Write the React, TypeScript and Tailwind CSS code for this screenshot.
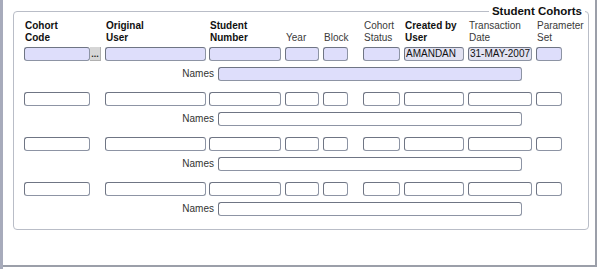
const cols = [
  { top: 'Cohort', bottom: 'Code', bold: true, w: 'w-[66px]', ml: 'ml-0', lookup: true },
  { top: 'Original', bottom: 'User', bold: true, w: 'w-[101px]', ml: 'ml-[4px]' },
  { top: 'Student', bottom: 'Number', bold: true, w: 'w-[72px]', ml: 'ml-[3px]' },
  { top: '', bottom: 'Year', bold: false, w: 'w-[34px]', ml: 'ml-[4px]' },
  { top: '', bottom: 'Block', bold: false, w: 'w-[25px]', ml: 'ml-[4px]' },
  { top: 'Cohort', bottom: 'Status', bold: false, w: 'w-[37px]', ml: 'ml-[15px]' },
  { top: 'Created by', bottom: 'User', bold: true, w: 'w-[60px]', ml: 'ml-[4px]', value: 'AMANDAN' },
  { top: 'Transaction', bottom: 'Date', bold: false, w: 'w-[64px]', ml: 'ml-[4px]', value: '31-MAY-2007' },
  { top: 'Parameter', bottom: 'Set', bold: false, w: 'w-[26px]', ml: 'ml-[4px]' },
];

function Field({ w, active, value }: { w: string; active: boolean; value?: string }) {
  const bg = value ? 'bg-[#e2e2f2]' : active ? 'bg-[#dedefb]' : 'bg-white';
  return (
    <div
      className={`${w} h-[14px] ${bg} border border-[#8d94a4] border-l-[#6f7584] border-t-[#6f7584] rounded-[3px] px-[1px] text-[10px] leading-[12px] text-[#111] overflow-hidden whitespace-nowrap`}
    >
      {value}
    </div>
  );
}

function Row({ active }: { active: boolean }) {
  return (
    <div className="flex flex-col">
      <div className="flex">
        {cols.map((c, i) => (
          <div key={i} className={`flex ${c.ml}`}>
            <Field w={c.w} active={active} value={active ? c.value : undefined} />
            {c.lookup && active && (
              <div className="w-[11px] h-[14px] bg-[#d6d6d6] border-r border-b border-[#b0b0b0] flex items-center justify-center text-[9px] leading-[6px] font-bold text-[#222]">
                ...
              </div>
            )}
            {c.lookup && !active && <div className="w-[11px]" />}
          </div>
        ))}
      </div>
      <div className="flex items-center mt-[6px]">
        <span className="w-[194px] text-right text-[10px] leading-[14px] text-[#333] pr-[4px]">Names</span>
        <Field w="w-[304px]" active={active} />
      </div>
    </div>
  );
}

export default function App() {
  return (
    <div
      className="w-[600px] h-[269px] bg-white flex"
      style={{ fontFamily: '"Liberation Sans", Arial, sans-serif' }}
    >
      <div className="w-[3px] h-full bg-[#a7abbb]" />
      <div className="w-[594px] h-[267px] border-r-2 border-b-2 border-[#9b9fa9] pl-[10px] pt-[11px]">
        <div className="relative w-[576px] h-[219px] border border-[#b9bdc7] rounded-[4px] pl-[10px] pt-[5px]">
          <span className="absolute -top-[8px] right-[3px] bg-white px-[3px] text-[11.5px] leading-[14px] font-bold text-[#111]">
            Student Cohorts
          </span>
          <div className="flex items-end h-[27px] mb-[3px]">
            {cols.map((c, i) => (
              <div
                key={i}
                className={`${c.ml} ${c.w} ${c.lookup ? 'mr-[11px]' : ''} pl-[1px] text-[10px] leading-[12px] whitespace-nowrap ${
                  c.bold ? 'font-bold text-[#111]' : 'text-[#3a3a3a]'
                }`}
              >
                {c.top && <div>{c.top}</div>}
                <div>{c.bottom}</div>
              </div>
            ))}
          </div>
          <div className="flex flex-col gap-[11px]">
            <Row active={true} />
            <Row active={false} />
            <Row active={false} />
            <Row active={false} />
          </div>
        </div>
      </div>
    </div>
  );
}
